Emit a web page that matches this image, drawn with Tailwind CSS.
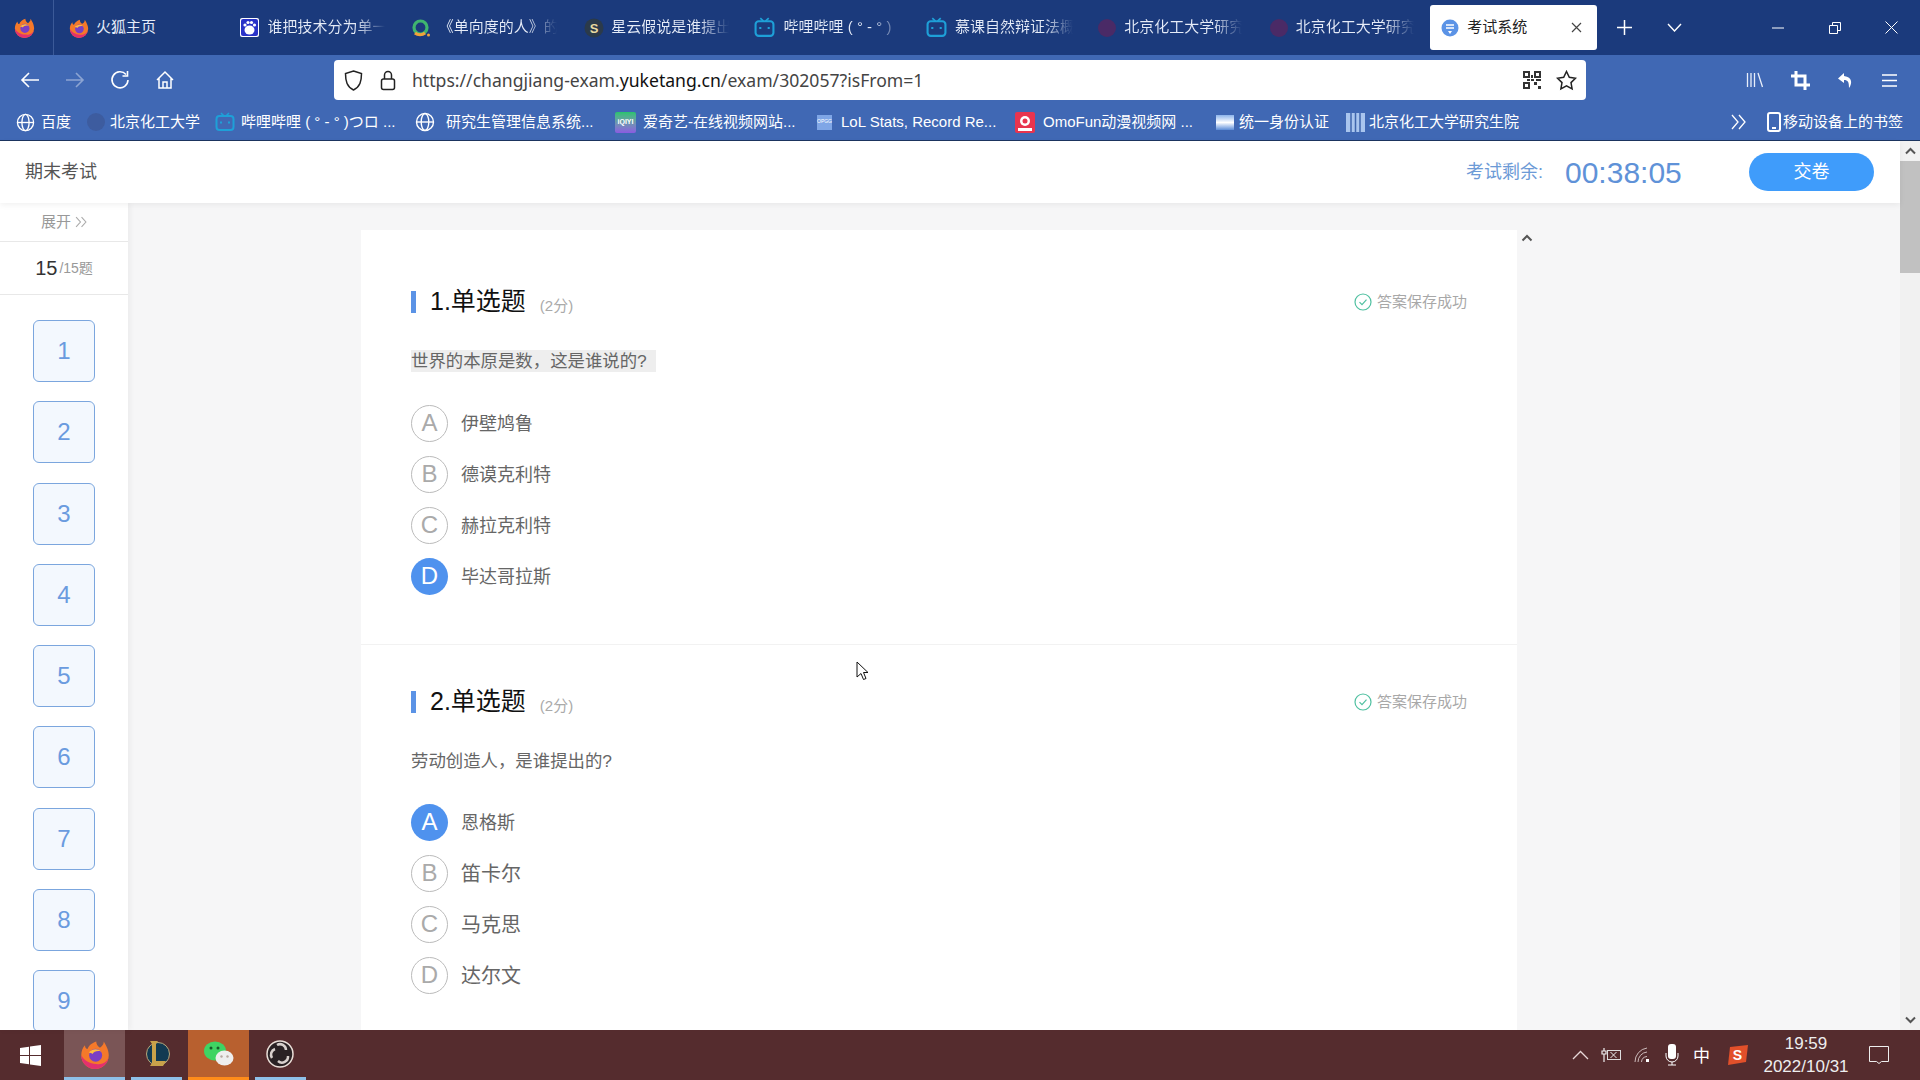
<!DOCTYPE html>
<html lang="zh-CN">
<head>
<meta charset="UTF-8">
<title>考试系统</title>
<script src="https://cdn.jsdelivr.net/npm/@tailwindcss/browser@4"></script>
</head>
<body class="w-[1920px] h-[1080px] overflow-hidden flex flex-col bg-white font-['Liberation_Sans','Noto_Sans_CJK_SC',sans-serif]">
<svg class="hidden">
  <symbol id="fox" viewBox="0 0 24 24">
    <path d="M19 2c1 2 4 6 4 11a11 11 0 0 1-22 0c0-3 1-6 3-8 0 2 1 3 2 3 1-3 4-5 7-6 0 2 1 4 3 5 1-1 3-2 3-5z" fill="#f5792a"/>
    <path d="M1 13a11 11 0 0 0 22 0c0 5-5 8-10 7-5 0-10-3-12-7z" fill="#e3316e"/>
    <circle cx="12.5" cy="13" r="5.2" fill="#7b3fc4"/>
    <path d="M7 11c2-3 7-4 10-1-3-1-6 0-7 2-1-1-2-1-3-1z" fill="#ffbd3f"/>
  </symbol>
  <symbol id="tv" viewBox="0 0 20 20">
    <path d="M6 1l3 3M14 1l-3 3" stroke="#1ea0d8" stroke-width="1.6" fill="none"/>
    <rect x="1.5" y="4" width="17" height="14" rx="3" fill="none" stroke="#1ea0d8" stroke-width="2"/>
    <path d="M6 9.5v2M14 9.5v2" stroke="#1ea0d8" stroke-width="2"/>
  </symbol>
  <symbol id="globe" viewBox="0 0 20 20">
    <g fill="none" stroke="#fff" stroke-width="1.4"><circle cx="10" cy="10" r="8.5"/><ellipse cx="10" cy="10" rx="3.8" ry="8.5"/><path d="M1.5 10h17"/></g>
  </symbol>
  <symbol id="ok" viewBox="0 0 18 18">
    <circle cx="9" cy="9" r="8" fill="none" stroke="#4fc0a0" stroke-width="1.2"/>
    <path d="M5.5 9.2l2.5 2.5 4.5-5" fill="none" stroke="#4fc0a0" stroke-width="1.2"/>
  </symbol>
</svg>

<!-- tabs -->
<div class="h-[55px] shrink-0 flex bg-[#1b3a7c] text-[15px] text-[#e6ecf8]">
  <div class="w-[54px] shrink-0 border-r border-[#3c5a98] flex items-center justify-center pr-[4px]"><svg class="w-[21px] h-[21px]"><use href="#fox"/></svg></div>
  <div class="w-[5px] shrink-0"></div>
  <div class="w-[171.4px] shrink-0 flex items-center pl-[10px] gap-[7px]"><svg class="w-[20px] h-[20px] shrink-0"><use href="#fox"/></svg><span class="w-[120px] whitespace-nowrap overflow-hidden">火狐主页</span></div>
  <div class="w-[171.4px] shrink-0 flex items-center pl-[10px] gap-[8px]">
    <svg class="w-[19px] h-[19px] shrink-0" viewBox="0 0 19 19"><rect width="19" height="19" rx="2" fill="#fff"/><rect x="1" y="1" width="17" height="17" rx="2" fill="#2932c8"/><ellipse cx="9.5" cy="12" rx="5" ry="4.5" fill="#fff"/><circle cx="5" cy="7" r="1.6" fill="#fff"/><circle cx="8" cy="4.5" r="1.6" fill="#fff"/><circle cx="11.5" cy="4.5" r="1.6" fill="#fff"/><circle cx="14.5" cy="7" r="1.6" fill="#fff"/></svg>
    <span class="w-[118px] whitespace-nowrap overflow-hidden bg-linear-to-r from-[#e6ecf8] from-75% to-transparent bg-clip-text text-transparent">谁把技术分为单一</span></div>
  <div class="w-[171.4px] shrink-0 flex items-center pl-[9px] gap-[8px]">
    <svg class="w-[20px] h-[20px] shrink-0" viewBox="0 0 20 20"><circle cx="9.5" cy="9.5" r="6.5" fill="none" stroke="#3fb56f" stroke-width="3.2"/><path d="M4 15a8 8 0 0 0 10 0" fill="none" stroke="#f0a33a" stroke-width="3.2"/><circle cx="17.5" cy="17" r="1.5" fill="#f0a33a"/></svg>
    <span class="w-[118px] whitespace-nowrap overflow-hidden bg-linear-to-r from-[#e6ecf8] from-75% to-transparent bg-clip-text text-transparent">《单向度的人》的</span></div>
  <div class="w-[171.4px] shrink-0 flex items-center pl-[11px] gap-[7px]">
    <svg class="w-[20px] h-[20px] shrink-0" viewBox="0 0 20 20"><circle cx="10" cy="10" r="9.5" fill="#2b3a4a"/><text x="10" y="14.5" text-anchor="middle" font-size="13" font-weight="700" fill="#e8d9a0" font-family="Liberation Sans">S</text></svg>
    <span class="w-[118px] whitespace-nowrap overflow-hidden bg-linear-to-r from-[#e6ecf8] from-75% to-transparent bg-clip-text text-transparent">星云假说是谁提出</span></div>
  <div class="w-[171.4px] shrink-0 flex items-center pl-[9px] gap-[9px]"><svg class="w-[21px] h-[21px] shrink-0"><use href="#tv"/></svg>
    <span class="w-[118px] whitespace-nowrap overflow-hidden bg-linear-to-r from-[#e6ecf8] from-75% to-transparent bg-clip-text text-transparent">哔哩哔哩 ( ° - ° )</span></div>
  <div class="w-[171.4px] shrink-0 flex items-center pl-[10px] gap-[8px]"><svg class="w-[21px] h-[21px] shrink-0"><use href="#tv"/></svg>
    <span class="w-[118px] whitespace-nowrap overflow-hidden bg-linear-to-r from-[#e6ecf8] from-75% to-transparent bg-clip-text text-transparent">慕课自然辩证法概</span></div>
  <div class="w-[171.4px] shrink-0 flex items-center pl-[11px] gap-[8px]"><div class="w-[18px] h-[18px] shrink-0 rounded-full bg-[#4a2a66]"></div>
    <span class="w-[118px] whitespace-nowrap overflow-hidden bg-linear-to-r from-[#e6ecf8] from-75% to-transparent bg-clip-text text-transparent">北京化工大学研究</span></div>
  <div class="w-[171.4px] shrink-0 flex items-center pl-[11px] gap-[8px]"><div class="w-[18px] h-[18px] shrink-0 rounded-full bg-[#4a2a66]"></div>
    <span class="w-[118px] whitespace-nowrap overflow-hidden bg-linear-to-r from-[#e6ecf8] from-75% to-transparent bg-clip-text text-transparent">北京化工大学研究</span></div>
  <div class="w-[167px] h-[45px] mt-[5px] shrink-0 rounded-[3px] bg-white text-[#222] flex items-center pl-[11px] pr-[15px]">
    <svg class="w-[18px] h-[18px] shrink-0" viewBox="0 0 18 18"><circle cx="9" cy="9" r="8.5" fill="#5b93e6"/><path d="M5 6h8M5 9h8" stroke="#fff" stroke-width="1.5"/><path d="M7 12h4l-2 3z" fill="#fff"/></svg>
    <span class="ml-[8px] flex-1">考试系统</span>
    <svg class="w-[11px] h-[11px]" viewBox="0 0 11 11"><path d="M1 1l9 9M10 1l-9 9" stroke="#444" stroke-width="1.2"/></svg>
  </div>
  <div class="w-[54px] shrink-0 flex items-center justify-center"><svg class="w-[17px] h-[17px]" viewBox="0 0 17 17"><path d="M8.5 1v15M1 8.5h15" stroke="#fff" stroke-width="1.5"/></svg></div>
  <div class="w-[46px] shrink-0 flex items-center justify-center"><svg class="w-[15px] h-[9px]" viewBox="0 0 15 9"><path d="M1 1l6.500 7L14 1" fill="none" stroke="#fff" stroke-width="1.4"/></svg></div>
  <div class="w-[57px] ml-[52px] shrink-0 flex items-center justify-center"><svg class="w-[12px] h-[2px]" viewBox="0 0 12 2"><path d="M0 1h12" stroke="#fff"/></svg></div>
  <div class="w-[57px] shrink-0 flex items-center justify-center"><svg class="w-[12px] h-[12px]" viewBox="0 0 12 12"><path d="M3.500 3V.5h8v8H9M.5 3.500h8v8h-8z" fill="none" stroke="#fff"/></svg></div>
  <div class="w-[57px] shrink-0 flex items-center justify-center"><svg class="w-[13px] h-[13px]" viewBox="0 0 13 13"><path d="M.5.5l12 12M12.500.5l-12 12" stroke="#fff"/></svg></div>
</div>

<!-- toolbar -->
<div class="h-[47px] shrink-0 flex items-start pt-[5px] bg-[#4068b4]">
  <div class="w-[334px] h-[40px] shrink-0 flex items-center pl-[20px] gap-[25px]">
    <svg class="w-[20px] h-[18px]" viewBox="0 0 20 18"><path d="M19 9H2M9 2L2 9l7 7" fill="none" stroke="#fff" stroke-width="1.6"/></svg>
    <svg class="w-[20px] h-[18px] opacity-40" viewBox="0 0 20 18"><path d="M1 9h17M11 2l7 7-7 7" fill="none" stroke="#fff" stroke-width="1.6"/></svg>
    <svg class="w-[20px] h-[20px]" viewBox="0 0 20 20"><path d="M16 4.500A8 8 0 1 0 18 10" fill="none" stroke="#fff" stroke-width="1.6"/><path d="M17.500 1v5h-5" fill="none" stroke="#fff" stroke-width="1.6"/></svg>
    <svg class="w-[20px] h-[20px]" viewBox="0 0 20 20"><path d="M2 10l8-8 8 8M4 8.500V18h12V8.500M8 18v-6h4v6" fill="none" stroke="#fff" stroke-width="1.5"/></svg>
  </div>
  <div class="w-[1252px] h-[40px] shrink-0 rounded-[4px] bg-white flex items-center pl-[10px] pr-[9px]">
    <svg class="w-[19px] h-[21px] shrink-0" viewBox="0 0 19 21"><path d="M9.500 1l8 2.500c0 8-1.500 13-8 16.500C3 16.500 1.500 11.500 1.500 3.500z" fill="none" stroke="#222" stroke-width="1.5"/></svg>
    <svg class="w-[16px] h-[21px] shrink-0 ml-[17px]" viewBox="0 0 16 21"><rect x="1.500" y="9" width="13" height="10.500" rx="2" fill="none" stroke="#222" stroke-width="1.5"/><path d="M4.500 9V5a3.500 3.500 0 0 1 7 0v4" fill="none" stroke="#222" stroke-width="1.5"/></svg>
    <span class="ml-[16px] flex-1 text-[17.6px] text-[#444] font-['Noto_Sans',sans-serif]">https://changjiang-exam.<span class="text-[#111]">yuketang.cn</span>/exam/302057?isFrom=1</span>
    <svg class="w-[18px] h-[18px] shrink-0" viewBox="0 0 18 18"><g fill="#333"><path d="M0 0h7v7H0zM11 0h7v7h-7zM0 11h7v7H0zM11 11h3v3h-3zM15 15h3v3h-3zM8 4h2v3H8zM8 8h3v2H8zM4 8h3v2H4zM13 8h5v2h-5z"/></g><g fill="#fff"><path d="M2 2h3v3H2zM13 2h3v3h-3zM2 13h3v3H2z"/></g></svg>
    <svg class="w-[21px] h-[21px] shrink-0 ml-[15px]" viewBox="0 0 21 21"><path d="M10.500 1.500l2.800 5.800 6.200.9-4.500 4.400 1.100 6.300-5.600-3-5.600 3 1.100-6.300L1.500 8.200l6.200-.9z" fill="none" stroke="#222" stroke-width="1.5"/></svg>
  </div>
  <div class="flex-1 h-[40px] flex items-center pl-[160px]">
    <svg class="w-[18px] h-[16px]" viewBox="0 0 18 16"><path d="M1.500 1v14M5 1v14M8.500 1v14M12 1l4.500 14" fill="none" stroke="#e8eefa" stroke-width="1.3"/></svg>
    <svg class="w-[19px] h-[19px] ml-[27px]" viewBox="0 0 19 19"><path d="M5 0v14h14M0 5h14v14" fill="none" stroke="#fff" stroke-width="3"/></svg>
    <svg class="w-[17px] h-[17px] ml-[27px]" viewBox="0 0 17 17"><path d="M7 1L1 6.500 7 11V8c4 0 5 2 5 8 3-4 4-11-5-12z" fill="#fff"/></svg>
    <svg class="w-[15px] h-[13px] ml-[28px]" viewBox="0 0 15 13"><path d="M0 1h15M0 6.500h15M0 12h15" stroke="#fff" stroke-width="1.3"/></svg>
  </div>
</div>

<!-- bookmarks -->
<div class="h-[39px] shrink-0 pt-[2px] flex items-center bg-[#4068b4] border-b border-[#1c3560] text-[15px] text-white whitespace-nowrap">
  <div class="w-[87px] pl-[16px] flex items-center gap-[6px]"><svg class="w-[19px] h-[19px]"><use href="#globe"/></svg>百度</div>
  <div class="w-[128px] flex items-center gap-[5px]"><div class="w-[18px] h-[18px] rounded-full bg-[#3d5c9f]"></div>北京化工大学</div>
  <div class="w-[200px] flex items-center gap-[6px]"><svg class="w-[20px] h-[20px]"><use href="#tv"/></svg>哔哩哔哩 ( ° - ° )つロ ...</div>
  <div class="w-[200px] flex items-center gap-[11px]"><svg class="w-[20px] h-[20px]"><use href="#globe"/></svg>研究生管理信息系统...</div>
  <div class="w-[202px] flex items-center gap-[7px]"><div class="w-[21px] h-[21px] rounded-[2px] bg-linear-to-b from-[#25c36d] to-[#8a5ae0] text-[7px] font-bold text-white flex items-center justify-center">iQIYI</div>爱奇艺-在线视频网站...</div>
  <div class="w-[198px] flex items-center gap-[9px]"><div class="w-[15px] h-[15px] bg-[#7fa6e6] text-[5px] flex items-center justify-center">OPGG</div>LoL Stats, Record Re...</div>
  <div class="w-[201px] flex items-center gap-[8px]"><svg class="w-[20px] h-[21px]" viewBox="0 0 20 21"><rect width="20" height="21" rx="2" fill="#e8344e"/><circle cx="10" cy="9" r="5" fill="#fff"/><circle cx="10" cy="9" r="2.500" fill="#e8344e"/><rect x="3" y="16" width="14" height="3" fill="#fff"/></svg>OmoFun动漫视频网 ...</div>
  <div class="w-[130px] flex items-center gap-[5px]"><div class="w-[18px] h-[15px] bg-linear-to-b from-[#8db4ea] via-white to-[#5b8bd6]"></div>统一身份认证</div>
  <div class="w-[385px] flex items-center gap-[4px]"><svg class="w-[19px] h-[19px]" viewBox="0 0 19 19"><rect width="19" height="19" fill="#a9c5ee"/><path d="M5 0v19M9.500 0v19M14 0v19" stroke="#3f66ad" stroke-width="1.500"/></svg>北京化工大学研究生院</div>
  <svg class="w-[15px] h-[16px]" viewBox="0 0 15 16"><path d="M1 1l6 7-6 7M8 1l6 7-6 7" fill="none" stroke="#fff" stroke-width="1.300"/></svg>
  <svg class="w-[14px] h-[20px] ml-[21px]" viewBox="0 0 14 20"><rect x="1" y="1" width="12" height="18" rx="2" fill="none" stroke="#fff" stroke-width="2"/><path d="M5 16h4" stroke="#fff" stroke-width="2"/></svg>
  <span class="ml-[2px]">移动设备上的书签</span>
</div>

<!-- page -->
<div class="h-[889px] shrink-0 flex relative">
  <div class="w-[1900px] shrink-0 flex flex-col">
    <div class="h-[62px] shrink-0 bg-white shadow-[0_2px_6px_rgba(0,0,0,0.06)] relative z-20 flex items-center pl-[25px] text-[18px] text-[#555]">
      <span class="flex-1">期末考试</span>
      <span class="text-[#6c9ad6]">考试剩余:</span>
      <span class="ml-[22px] w-[118px] text-[30px] text-[#5f92d8]">00:38:05</span>
      <button class="ml-[66px] mr-[26px] w-[125px] h-[38px] rounded-full bg-[#3f9cfb] text-white text-[18px]">交卷</button>
    </div>
    <div class="flex-1 flex min-h-0 bg-[#f6f6f7]">
      <div class="w-[128px] shrink-0 bg-white shadow-[2px_0_6px_rgba(0,0,0,0.05)] relative z-10 flex flex-col overflow-hidden">
        <div class="h-[39px] shrink-0 border-b border-[#e8e8e8] flex items-center justify-center gap-[4px] text-[15px] text-[#999]">展开<svg class="w-[12px] h-[12px]" viewBox="0 0 11 11"><path d="M1 1l4 4.500-4 4.500M6 1l4 4.500-4 4.500" fill="none" stroke="#aaa"/></svg></div>
        <div class="h-[53px] shrink-0 border-b border-[#e8e8e8] flex items-center justify-center text-[14px] text-[#999]"><span class="text-[20px] text-[#333]">15</span><span class="ml-[2px]">/15题</span></div>
        <div class="pt-[25px] pl-[33px] flex flex-col gap-[19.3px] text-[24px] text-[#6a9bdf]">
          <div class="w-[62px] h-[62px] shrink-0 rounded-[6px] border border-[#7ba6de] bg-[#f3f8fe] flex items-center justify-center">1</div>
          <div class="w-[62px] h-[62px] shrink-0 rounded-[6px] border border-[#7ba6de] bg-[#f3f8fe] flex items-center justify-center">2</div>
          <div class="w-[62px] h-[62px] shrink-0 rounded-[6px] border border-[#7ba6de] bg-[#f3f8fe] flex items-center justify-center">3</div>
          <div class="w-[62px] h-[62px] shrink-0 rounded-[6px] border border-[#7ba6de] bg-[#f3f8fe] flex items-center justify-center">4</div>
          <div class="w-[62px] h-[62px] shrink-0 rounded-[6px] border border-[#7ba6de] bg-[#f3f8fe] flex items-center justify-center">5</div>
          <div class="w-[62px] h-[62px] shrink-0 rounded-[6px] border border-[#7ba6de] bg-[#f3f8fe] flex items-center justify-center">6</div>
          <div class="w-[62px] h-[62px] shrink-0 rounded-[6px] border border-[#7ba6de] bg-[#f3f8fe] flex items-center justify-center">7</div>
          <div class="w-[62px] h-[62px] shrink-0 rounded-[6px] border border-[#7ba6de] bg-[#f3f8fe] flex items-center justify-center">8</div>
          <div class="w-[62px] h-[62px] shrink-0 rounded-[6px] border border-[#7ba6de] bg-[#f3f8fe] flex items-center justify-center">9</div>
        </div>
      </div>
      <div class="flex-1 pl-[233px] pt-[27px] flex min-w-0 overflow-hidden">
        <div class="w-[1156px] shrink-0 bg-white self-stretch overflow-hidden">
          <section class="h-[415px] border-b border-[#f2f2f2] pl-[50px] pr-[50px] pt-[61px]">
            <div class="h-[22px] flex items-center">
              <div class="w-[5px] h-[22px] bg-[#5b93e6]"></div>
              <span class="ml-[14px] text-[25px] text-[#111]">1.单选题</span>
              <span class="ml-[14px] mt-[8px] text-[15px] text-[#aaa] flex-1">(2分)</span>
              <svg class="w-[18px] h-[18px]"><use href="#ok"/></svg>
              <span class="ml-[5px] text-[15px] text-[#a8a8a8]">答案保存成功</span>
            </div>
            <div class="mt-[37px] h-[22px] w-[245px] bg-[#eeeeee] flex items-center text-[17.4px] text-[#666] whitespace-nowrap">世界的本原是数，这是谁说的?</div>
            <div class="mt-[33px] flex flex-col gap-[14px] text-[18px] text-[#666]">
              <div class="flex items-center gap-[13px]"><span class="w-[37px] h-[37px] pb-[2px] rounded-full border border-[#bbb] text-[24px] text-[#aaa] flex items-center justify-center">A</span><span class="mt-[2px]">伊壁鸠鲁</span></div>
              <div class="flex items-center gap-[13px]"><span class="w-[37px] h-[37px] pb-[2px] rounded-full border border-[#bbb] text-[24px] text-[#aaa] flex items-center justify-center">B</span><span class="mt-[2px]">德谟克利特</span></div>
              <div class="flex items-center gap-[13px]"><span class="w-[37px] h-[37px] pb-[2px] rounded-full border border-[#bbb] text-[24px] text-[#aaa] flex items-center justify-center">C</span><span class="mt-[2px]">赫拉克利特</span></div>
              <div class="flex items-center gap-[13px]"><span class="w-[37px] h-[37px] pb-[2px] rounded-full bg-[#4f92ee] text-[24px] text-white flex items-center justify-center">D</span><span class="mt-[2px]">毕达哥拉斯</span></div>
            </div>
          </section>
          <section class="pl-[50px] pr-[50px] pt-[46px]">
            <div class="h-[22px] flex items-center">
              <div class="w-[5px] h-[22px] bg-[#5b93e6]"></div>
              <span class="ml-[14px] text-[25px] text-[#111]">2.单选题</span>
              <span class="ml-[14px] mt-[8px] text-[15px] text-[#aaa] flex-1">(2分)</span>
              <svg class="w-[18px] h-[18px]"><use href="#ok"/></svg>
              <span class="ml-[5px] text-[15px] text-[#a8a8a8]">答案保存成功</span>
            </div>
            <div class="mt-[37px] h-[22px] flex items-center text-[17.4px] text-[#666]">劳动创造人，是谁提出的?</div>
            <div class="mt-[32px] flex flex-col gap-[14px] text-[18px] text-[#666]">
              <div class="flex items-center gap-[13px]"><span class="w-[37px] h-[37px] pb-[2px] rounded-full bg-[#4f92ee] text-[24px] text-white flex items-center justify-center">A</span><span class="mt-[2px]">恩格斯</span></div>
              <div class="flex items-center gap-[13px]"><span class="w-[37px] h-[37px] pb-[2px] rounded-full border border-[#bbb] text-[24px] text-[#aaa] flex items-center justify-center">B</span><span class="text-[20px]">笛卡尔</span></div>
              <div class="flex items-center gap-[13px]"><span class="w-[37px] h-[37px] pb-[2px] rounded-full border border-[#bbb] text-[24px] text-[#aaa] flex items-center justify-center">C</span><span class="text-[20px]">马克思</span></div>
              <div class="flex items-center gap-[13px]"><span class="w-[37px] h-[37px] pb-[2px] rounded-full border border-[#bbb] text-[24px] text-[#aaa] flex items-center justify-center">D</span><span class="text-[20px]">达尔文</span></div>
            </div>
          </section>
        </div>
        <div class="w-[20px] shrink-0 flex justify-center pt-[4px]"><svg class="w-[12px] h-[8px]" viewBox="0 0 11 8"><path d="M1 6.500l4.500-4.500 4.500 4.500" fill="none" stroke="#555" stroke-width="2"/></svg></div>
      </div>
    </div>
  </div>
  <div class="w-[20px] shrink-0 bg-[#f1f1f1] flex flex-col items-center">
    <div class="h-[20px] shrink-0 flex items-center justify-center"><svg class="w-[11px] h-[8px]" viewBox="0 0 11 8"><path d="M1 6.500l4.500-4.500 4.500 4.500" fill="none" stroke="#555" stroke-width="2"/></svg></div>
    <div class="w-full h-[112px] shrink-0 bg-[#c1c1c1]"></div>
    <div class="flex-1"></div>
    <div class="h-[20px] shrink-0 flex items-center justify-center"><svg class="w-[11px] h-[8px]" viewBox="0 0 11 8"><path d="M1 1.500l4.500 4.500 4.500-4.500" fill="none" stroke="#555" stroke-width="2"/></svg></div>
  </div>
  <svg class="absolute left-[856px] top-[520px] w-[13px] h-[20px] z-30" viewBox="0 0 13 20"><path d="M1 1v15l4-3.500 2.500 6 2.500-1-2.500-6H12z" fill="#fff" stroke="#111"/></svg>
</div>

<!-- taskbar -->
<div class="h-[50px] shrink-0 flex bg-[#552c2e] text-white">
  <div class="w-[64px] shrink-0 flex items-center justify-center pr-[4px]"><svg class="w-[21px] h-[21px]" viewBox="0 0 21 21"><path d="M0 3l9-1.300V10H0zM10 1.500L21 0v10H10zM0 11h9v8.300L0 18zM10 11h11v10l-11-1.500z" fill="#fff"/></svg></div>
  <div class="w-[61px] shrink-0 bg-[#7a5556] border-b-[3px] border-[#8ec0e8] flex items-center justify-center"><svg class="w-[30px] h-[30px]"><use href="#fox"/></svg></div>
  <div class="w-[63px] shrink-0 flex justify-center">
    <div class="w-[51px] border-b-[3px] border-[#8ec0e8] flex items-center justify-center"><svg class="w-[26px] h-[28px]" viewBox="0 0 26 28"><circle cx="14" cy="14" r="11.500" fill="#123a52" stroke="#b7a77a"/><path d="M6 1h8l-2 3v17h10l-3 5H6l2-3V4z" fill="#c9a24a"/></svg></div>
  </div>
  <div class="w-[61px] shrink-0 bg-[#b8602f] border-b-[3px] border-[#ff8c1a] flex items-center justify-center"><svg class="w-[32px] h-[28px]" viewBox="0 0 32 28"><ellipse cx="12" cy="11" rx="11" ry="9.500" fill="#3fd463"/><circle cx="8" cy="8" r="1.500" fill="#165c2a"/><circle cx="15" cy="8" r="1.500" fill="#165c2a"/><ellipse cx="21.500" cy="18" rx="9" ry="7.500" fill="#eee"/><circle cx="18.500" cy="16.500" r="1.200" fill="#b8a8a0"/><circle cx="24.500" cy="16.500" r="1.200" fill="#b8a8a0"/></svg></div>
  <div class="w-[62px] shrink-0 flex justify-center">
    <div class="w-[51px] border-b-[3px] border-[#8ec0e8] flex items-center justify-center"><svg class="w-[28px] h-[28px]" viewBox="0 0 28 28"><circle cx="14" cy="14" r="13" fill="#2a2224" stroke="#eadfd8" stroke-width="1.500"/><g fill="none" stroke="#d8d0cc" stroke-width="2.500"><path d="M11 5a6 6 0 0 1 9 5"/><path d="M22 16a6 6 0 0 1-10 5"/><path d="M6 18a6 6 0 0 1 3-9"/></g></svg></div>
  </div>
  <div class="flex-1 flex items-center justify-end">
    <svg class="w-[17px] h-[10px]" viewBox="0 0 17 10"><path d="M1 9l7.500-7.500L16 9" fill="none" stroke="#e8d8d8" stroke-width="1.300"/></svg>
    <svg class="w-[21px] h-[14px] ml-[12px]" viewBox="0 0 21 14"><path d="M3 0v3M1 3h4v3H1zM3 6v8" fill="none" stroke="#eee" stroke-width="1.200"/><rect x="6.500" y="2.500" width="13" height="9" fill="none" stroke="#ddd"/><path d="M9.500 4l6 6M15.500 4l-6 6" stroke="#eee"/></svg>
    <svg class="w-[17px] h-[16px] ml-[12px]" viewBox="0 0 17 16"><g fill="none" stroke="#cdbcbc"><path d="M1 15A14 14 0 0 1 13 1"/><path d="M4 15A10 10 0 0 1 13 5"/><path d="M7.500 15A6 6 0 0 1 13 9.500"/></g><rect x="12" y="12" width="3" height="3" fill="#fff"/></svg>
    <svg class="w-[14px] h-[22px] ml-[14px]" viewBox="0 0 14 22"><rect x="3" y="0" width="8" height="15" rx="3" fill="#fff"/><path d="M1 9v3a6 6 0 0 0 12 0V9M7 18v3M3 21h8" fill="none" stroke="#fff"/></svg>
    <span class="ml-[14px] text-[17px] font-['Noto_Sans_CJK_SC',sans-serif]">中</span>
    <svg class="w-[21px] h-[20px] ml-[17px]" viewBox="0 0 21 20"><path d="M3 2l18-2-2 17-18 3z" fill="#e2502a"/><text x="10.500" y="15" text-anchor="middle" font-size="14" font-weight="700" fill="#fff" font-family="Liberation Sans">S</text></svg>
    <div class="w-[90px] ml-[13px] text-center text-[17px] leading-[23px] text-[#eee] flex flex-col"><span>19:59</span><span>2022/10/31</span></div>
    <svg class="w-[20px] h-[18px] ml-[18px] mr-[31px]" viewBox="0 0 20 18"><path d="M.5.500h19v15h-7l-2.500 2-2.500-2h-7z" fill="none" stroke="#eee"/></svg>
  </div>
</div>
</body>
</html>
